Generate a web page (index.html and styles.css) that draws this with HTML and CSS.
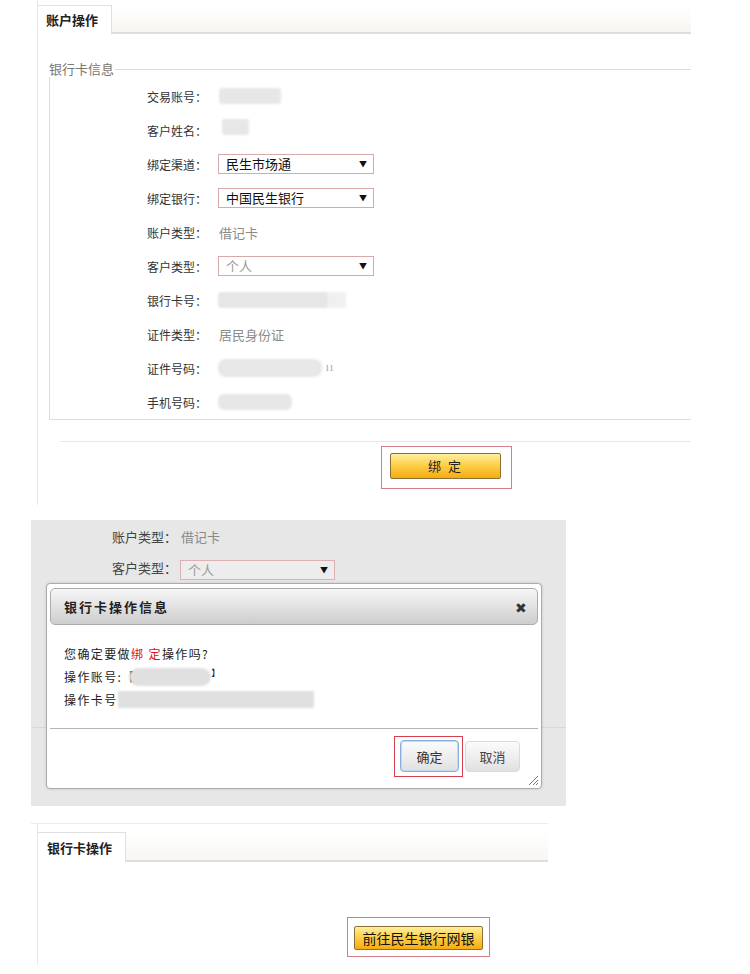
FILE: index.html
```html
<!DOCTYPE html>
<html lang="zh-CN">
<head>
<meta charset="utf-8">
<title>银行卡绑定</title>
<link rel="stylesheet" href="styles.css">
</head>
<body>
<div class="page">

  <section class="panel panel-main">
    <div class="tabbar">
      <div class="tab tab-account">账户操作</div>
    </div>
    <fieldset class="card-fs">
      <legend>银行卡信息</legend>
      <div class="form">
        <div class="label">交易账号：</div>
        <div class="value"><span class="blur blur-acc"></span></div>

        <div class="label">客户姓名：</div>
        <div class="value"><span class="blur blur-name"></span></div>

        <div class="label">绑定渠道：</div>
        <div class="value"><div class="select"><span class="opt">民生市场通</span><span class="arrow">▼</span></div></div>

        <div class="label">绑定银行：</div>
        <div class="value"><div class="select"><span class="opt">中国民生银行</span><span class="arrow">▼</span></div></div>

        <div class="label">账户类型：</div>
        <div class="value text-muted">借记卡</div>

        <div class="label">客户类型：</div>
        <div class="value"><div class="select"><span class="opt opt-muted">个人</span><span class="arrow">▼</span></div></div>

        <div class="label">银行卡号：</div>
        <div class="value"><span class="blur blur-card"></span></div>

        <div class="label">证件类型：</div>
        <div class="value text-muted">居民身份证</div>

        <div class="label">证件号码：</div>
        <div class="value"><span class="blur blur-id"></span><span class="tail">11</span></div>

        <div class="label">手机号码：</div>
        <div class="value"><span class="blur blur-phone"></span></div>
      </div>
    </fieldset>
    <div class="sep"></div>
    <div class="actions">
      <div class="hl hl-bind"><button class="btn-orange btn-bind" type="button">绑 定</button></div>
    </div>
  </section>

  <section class="shot2">
    <div class="form form-back">
      <div class="label">账户类型：</div>
      <div class="value text-muted">借记卡</div>
      <div class="label">客户类型：</div>
      <div class="value"><div class="select select-back"><span class="opt opt-muted">个人</span><span class="arrow">▼</span></div></div>
    </div>

    <div class="dialog">
      <div class="dlg-head">
        <span class="dlg-title">银行卡操作信息</span>
        <span class="dlg-close">✖</span>
      </div>
      <div class="dlg-body">
        <p>您确定要做<span class="red">绑 定</span>操作吗?</p>
        <p>操作账号:<b class="bracket">【</b><span class="blur blur-dacc"></span><span class="bracket-end">】</span></p>
        <p>操作卡号<span class="blur blur-dcard"></span></p>
      </div>
      <div class="dlg-foot">
        <div class="hl hl-ok"><button class="btn-gray btn-ok" type="button">确定</button></div>
        <button class="btn-gray btn-cancel" type="button">取消</button>
      </div>
      <svg class="grip" width="12" height="12" viewBox="0 0 12 12">
        <path d="M11 2 L2 11 M11 6 L6 11 M11 9 L9 11" stroke="#777" stroke-width="1" fill="none"/>
      </svg>
    </div>
  </section>

  <section class="shot3">
    <div class="panel panel-bank">
      <div class="tabbar">
        <div class="tab tab-bank">银行卡操作</div>
      </div>
      <div class="actions actions-bank">
        <div class="hl hl-go"><button class="btn-orange btn-go" type="button">前往民生银行网银</button></div>
      </div>
    </div>
  </section>

</div>
</body>
</html>
```

FILE: styles.css
```css
* { box-sizing: border-box; }

html, body {
  margin: 0;
  padding: 0;
  background: #fff;
}

body {
  font-family: "Noto Sans CJK SC", "Noto Sans", "Liberation Sans", sans-serif;
  font-size: 12px;
  color: #333;
}

.page {
  width: 750px;
  height: 974px;
  overflow: hidden;
}

/* ---------- panel / tabs ---------- */
.panel {
  border-left: 1px solid #e8e8e8;
}

.panel-main {
  margin-left: 37px;
  width: 654px;
  height: 505px;
  padding-top: 5px;
}

.tabbar {
  display: flex;
  height: 29px;
  background: linear-gradient(to bottom, #ffffff 0%, #f7f6f1 100%);
  border-bottom: 2px solid #dedede;
}

.tab {
  height: 29px;
  background: #fff;
  border: 1px solid #e0e0e0;
  border-bottom: none;
  border-left: none;
  font-size: 13px;
  font-weight: bold;
  color: #222;
  line-height: 28px;
  padding-left: 8px;
}

.tab-account { width: 74px; }

/* ---------- fieldset ---------- */
.card-fs {
  margin: 27px 0 0 11px;
  padding: 0;
  border: 1px solid #dcdcdc;
  border-right: none;
  min-width: 0;
}

.card-fs legend {
  padding: 0 1px 0 0;
  margin-left: -1px;
  font-size: 13px;
  line-height: 16px;
  color: #777;
}

.form {
  display: grid;
  grid-template-columns: 157px 1fr;
  column-gap: 11px;
  grid-auto-rows: 34px;
  align-items: center;
  padding-top: 2px;
}

.label {
  text-align: right;
  font-size: 12px;
  color: #333;
  white-space: nowrap;
}

.value {
  display: flex;
  align-items: center;
  font-size: 13px;
  color: #222;
}

.text-muted {
  color: #8a8a8a;
  padding-left: 1px;
}

.select {
  width: 156px;
  height: 20px;
  border: 1px solid #d8a9ab;
  background: #fff;
  display: flex;
  align-items: center;
  justify-content: space-between;
  padding: 0 6px 0 7px;
}

.opt {
  font-size: 13px;
  line-height: 18px;
  color: #111;
}

.opt-muted { color: #999; }

.arrow {
  font-size: 8px;
  color: #111;
  line-height: 18px;
}

/* blurred (masked) values */
.blur {
  display: inline-block;
  height: 16px;
  background: #e7e7e7;
  border-radius: 3px;
  filter: blur(1.2px);
}

.blur-acc { width: 62px; margin-left: 1px; }
.blur-name { width: 27px; margin-left: 4px; margin-top: -6px; }
.blur-card {
  width: 128px;
  background: linear-gradient(to right, #e6e6e6 0%, #e6e6e6 85%, #f0f0f0 86%, #f0f0f0 100%);
}
.blur-id { width: 104px; height: 18px; border-radius: 8px; }
.blur-phone { width: 74px; border-radius: 6px; }

.tail {
  font-family: "Liberation Serif", serif;
  font-size: 9px;
  color: #999;
  margin-left: 3px;
}

/* ---------- separator & action ---------- */
.sep {
  margin: 21px 0 0 22px;
  height: 1px;
  background: #e8e8e8;
}

.actions {
  display: flex;
  padding-left: 343px;
  margin-top: 4px;
}

.hl {
  border: 1px solid #cf7f8a;
}

.hl-bind {
  width: 131px;
  height: 43px;
  padding: 6px 10px 0 8px;
}

.btn-orange {
  font-family: "Noto Sans CJK SC", "Noto Sans", sans-serif;
  border: 1px solid #8a7236;
  border-radius: 2px;
  background: linear-gradient(to bottom, #ffef9e 0%, #fdd04a 45%, #f7ab12 100%);
  color: #222;
  padding: 0;
  cursor: pointer;
}

.btn-bind {
  width: 111px;
  height: 26px;
  font-size: 13px;
  line-height: 24px;
  letter-spacing: 2px;
}

/* ---------- screenshot 2 : dialog ---------- */
.shot2 {
  margin: 15px 0 0 31px;
  width: 535px;
  height: 286px;
  padding-top: 0;
  background:
    linear-gradient(to bottom, transparent 207px, #d9d9d9 207px, #d9d9d9 208px, transparent 208px),
    #e7e7e7;
}

.form-back {
  grid-template-columns: 146px 1fr;
  column-gap: 3px;
  grid-template-rows: 32px 31px;
  grid-auto-rows: auto;
  padding-top: 0;
}

.form-back .label {
  color: #444;
  font-size: 13px;
}

.select-back {
  width: 155px;
  margin-top: 4px;
  background: #ededed;
  border-color: #dbb2b4;
}

.dialog {
  position: relative;
  margin-left: 15px;
  width: 496px;
  height: 206px;
  background: #fff;
  border: 1px solid #ababab;
  border-radius: 4px;
  box-shadow: 0 0 3px rgba(0, 0, 0, 0.15);
  padding: 4px 3px 0 3px;
}

.dlg-head {
  height: 37px;
  border: 1px solid #acacac;
  border-radius: 5px;
  background: linear-gradient(to bottom, #f6f6f6 0%, #e2e2e2 50%, #cdcdcd 100%);
  display: flex;
  align-items: center;
  justify-content: space-between;
  padding: 0 10px 0 13px;
}

.dlg-title {
  font-size: 13px;
  font-weight: bold;
  color: #222;
  letter-spacing: 2px;
}

.dlg-close {
  font-size: 14px;
  color: #333;
}

.dlg-body {
  height: 103px;
  padding: 17px 0 0 14px;
}

.dlg-body p {
  margin: 0;
  font-size: 12px;
  line-height: 23px;
  color: #222;
  letter-spacing: 1.4px;
  display: flex;
  align-items: center;
}

.red { color: #d11; }

.bracket {
  font-weight: bold;
  color: #000;
  letter-spacing: 0;
}

.bracket-end {
  font-size: 9px;
  letter-spacing: 0;
  margin-top: -8px;
}

.blur-dacc {
  width: 82px;
  height: 18px;
  border-radius: 9px;
  margin-left: -5px;
  background: #e0e0e0;
}

.blur-dcard {
  width: 196px;
  height: 17px;
  border-radius: 0;
  background: #e0e0e0;
  filter: blur(0.8px);
}

.dlg-foot {
  border-top: 1px solid #b5b5b5;
  display: flex;
  justify-content: flex-end;
  align-items: flex-start;
  padding: 7px 18px 0 0;
}

.hl-ok {
  border-color: #d6404e;
  padding: 3px 3px 4px 5px;
}

.btn-gray {
  font-family: "Noto Sans CJK SC", "Noto Sans", sans-serif;
  font-size: 13px;
  color: #333;
  background: linear-gradient(to bottom, #fbfbfb 0%, #ececec 60%, #e0e0e0 100%);
  border: 1px solid #cfcfcf;
  border-radius: 4px;
  padding: 0;
  cursor: pointer;
}

.btn-ok {
  width: 59px;
  height: 32px;
  border-color: #86ace0;
  box-shadow: inset 0 0 0 1px #c7d9f0;
}

.btn-cancel {
  width: 55px;
  height: 31px;
  margin: 5px 0 0 2px;
  color: #444;
  border-color: #dadada;
}

.grip {
  position: absolute;
  right: 2px;
  bottom: 2px;
}

/* ---------- screenshot 3 ---------- */
.shot3 {
  margin: 17px 0 0 31px;
  width: 517px;
  border-top: 1px solid #f3e8e8;
}

.panel-bank {
  margin-left: 6px;
  height: 141px;
  padding-top: 8px;
}

.panel-bank .tabbar { height: 30px; }

.tab-bank {
  width: 88px;
  height: 30px;
  line-height: 30px;
  padding-left: 9px;
}

.actions-bank {
  padding-left: 309px;
  margin-top: 55px;
}

.hl-go {
  width: 143px;
  height: 40px;
  padding: 8px 6px 0 6px;
}

.btn-go {
  width: 129px;
  height: 24px;
  font-size: 14px;
  line-height: 22px;
  color: #111;
}
```
